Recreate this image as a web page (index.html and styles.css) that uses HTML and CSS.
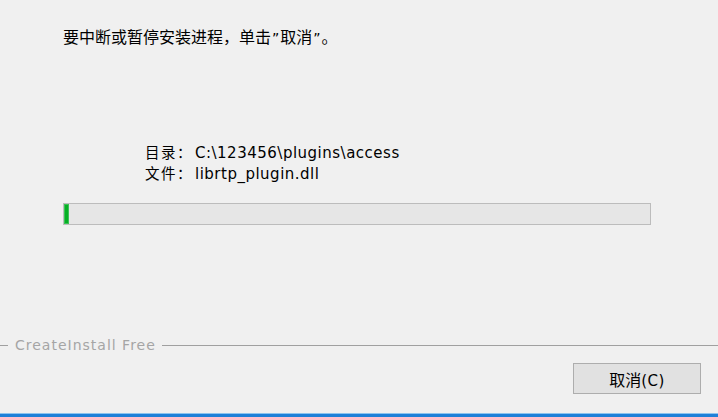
FILE: index.html
```html
<!DOCTYPE html>
<html lang="zh-CN">
<head>
<meta charset="utf-8">
<title>CreateInstall</title>
<link rel="stylesheet" href="styles.css">
</head>
<body>
<div class="window">
  <div class="msg">要中断或暂停安装进程，单击<span class="q">”</span>取消<span class="q">”</span>。</div>
  <div class="info">
    <div class="row"><span class="lbl">目录：</span><span class="val">C:\123456\plugins\access</span></div>
    <div class="row"><span class="lbl">文件：</span><span class="val">librtp_plugin.dll</span></div>
  </div>
  <div class="progress"><div class="fill" style="width:5px"></div></div>
  <div class="sep"><span class="sep-l"></span><span class="sep-t">CreateInstall Free</span><span class="sep-r"></span></div>
  <div class="footer"><button class="btn">取消<span class="btn-k">(C)</span></button></div>
  <div class="accent"></div>
</div>
</body>
</html>
```
FILE: styles.css
```css
html, body {
  margin: 0;
  padding: 0;
  background: #f0f0f0;
}
.window {
  width: 718px;
  height: 417px;
  display: flex;
  flex-direction: column;
  font-family: "Noto Sans CJK SC", "Noto Sans", sans-serif;
  color: #000;
}
.msg {
  padding-top: 25px;
  padding-left: 63px;
  height: 22px;
  line-height: 22px;
  font-size: 16px;
}
.msg .q {
  font-family: "DejaVu Sans", sans-serif;
  font-size: 14px;
  margin: 0 1px;
}
.info {
  margin-top: 94px;
  padding-left: 145px;
  line-height: 21px;
}
.row {
  display: flex;
  align-items: baseline;
  height: 21px;
  line-height: 21px;
}
.lbl {
  font-family: "Noto Sans CJK SC", sans-serif;
  font-size: 14.5px;
  letter-spacing: 1.5px;
  line-height: 21px;
}
.val {
  font-family: "DejaVu Sans", sans-serif;
  font-size: 15px;
  line-height: 21px;
  letter-spacing: 0.5px;
  margin-left: 2px;
}
.progress {
  margin-top: 20px;
  margin-left: 63px;
  width: 586px;
  height: 20px;
  border: 1px solid #bcbcbc;
  background: #e6e6e6;
  display: flex;
}
.progress .fill {
  background: #06b025;
  height: 20px;
  box-shadow: inset 0 0 0 1px #3cc256;
}
.sep {
  margin-top: 112px;
  height: 16px;
  display: flex;
  align-items: center;
}
.sep-l {
  width: 8px;
  height: 1px;
  background: #a0a0a0;
}
.sep-t {
  font-family: "DejaVu Sans", Verdana, sans-serif;
  font-size: 14px;
  letter-spacing: 1px;
  color: #a5a5a5;
  padding: 0 6px 0 7px;
  line-height: 16px;
}
.sep-r {
  flex: 1;
  height: 1px;
  background: #a0a0a0;
}
.footer {
  margin-top: 10px;
  display: flex;
  justify-content: flex-end;
  padding-right: 17px;
}
.btn {
  width: 128px;
  height: 31px;
  border: 1px solid #adadad;
  background: #e1e1e1;
  font-family: "Noto Sans CJK SC", sans-serif;
  font-size: 16px;
  color: #000;
  padding: 0;
  margin: 0;
}
.btn-k {
  font-family: "DejaVu Sans", sans-serif;
  font-size: 15px;
  letter-spacing: 0.5px;
}
.accent {
  margin-top: auto;
  height: 4px;
  border-top: 1px solid #8cc3ee;
  background: #1e80d8;
  box-sizing: border-box;
}
```
